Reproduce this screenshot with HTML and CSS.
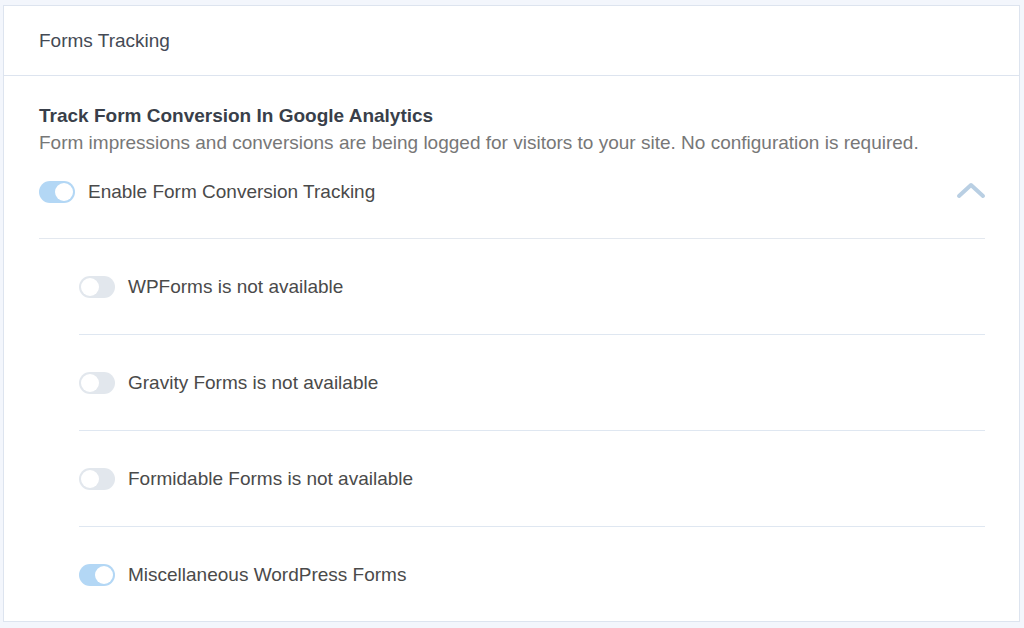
FILE: index.html
```html
<!DOCTYPE html>
<html lang="en">
<head>
<meta charset="utf-8">
<title>Forms Tracking</title>
<link rel="stylesheet" href="styles.css">
</head>
<body>
<div class="card">
  <div class="card-header">Forms Tracking</div>
  <div class="card-body">
    <div class="title">Track Form Conversion In Google Analytics</div>
    <div class="desc">Form impressions and conversions are being logged for visitors to your site. No configuration is required.</div>
    <div class="main-row">
      <span class="toggle on"><span class="knob"></span></span>
      <span class="label">Enable Form Conversion Tracking</span>
      <svg class="chevron" width="30" height="18" viewBox="0 0 30 18"><polyline points="3,15 15,4 27,15" fill="none" stroke="#b9cfe3" stroke-width="4" stroke-linecap="round" stroke-linejoin="round"/></svg>
    </div>
    <div class="sub-list">
      <div class="sub-item"><span class="toggle"><span class="knob"></span></span><span class="label">WPForms is not available</span></div>
      <div class="sub-item"><span class="toggle"><span class="knob"></span></span><span class="label">Gravity Forms is not available</span></div>
      <div class="sub-item"><span class="toggle"><span class="knob"></span></span><span class="label">Formidable Forms is not available</span></div>
      <div class="sub-item"><span class="toggle on"><span class="knob"></span></span><span class="label">Miscellaneous WordPress Forms</span></div>
    </div>
  </div>
</div>
</body>
</html>
```
FILE: styles.css
```css
html, body {
  margin: 0;
  padding: 0;
  background: #f3f6fc;
  font-family: "Liberation Sans", Arial, sans-serif;
}
.card {
  margin: 5px 4px 0 3px;
  height: 617px;
  box-sizing: border-box;
  background: #fff;
  border: 1px solid #dde4ef;
}
.card-header {
  height: 69px;
  display: flex;
  align-items: center;
  padding-left: 35px;
  font-size: 19px;
  color: #444a55;
  border-bottom: 1px solid #dde4ef;
}
.card-body {
  padding: 28px 34px 0 35px;
}
.title {
  font-size: 19px;
  font-weight: bold;
  line-height: 24px;
  color: #393f4a;
}
.desc {
  font-size: 19px;
  line-height: 30px;
  color: #777;
}
.main-row {
  display: flex;
  align-items: center;
  height: 22px;
  margin-top: 23px;
  margin-bottom: 35px;
}
.chevron {
  margin-left: auto;
  margin-right: -1px;
  margin-top: -4px;
}
.toggle {
  width: 36px;
  height: 22px;
  border-radius: 11px;
  background: #e2e7ed;
  position: relative;
  flex: none;
  box-sizing: border-box;
}
.toggle .knob {
  position: absolute;
  top: 2px;
  left: 2px;
  width: 18px;
  height: 18px;
  border-radius: 50%;
  background: #fff;
}
.toggle.on {
  background: #b3d7f5;
}
.toggle.on .knob {
  left: 16px;
}
.label {
  margin-left: 13px;
  font-size: 19px;
  color: #4a4a4a;
}
.sub-list {
  border-top: 1px solid #e3e8ef;
  padding-left: 40px;
}
.sub-item {
  display: flex;
  align-items: center;
  height: 22px;
  padding: 37px 0 36px;
  border-bottom: 1px solid #dfe7f1;
}
.sub-item:last-child {
  border-bottom: none;
}
```
